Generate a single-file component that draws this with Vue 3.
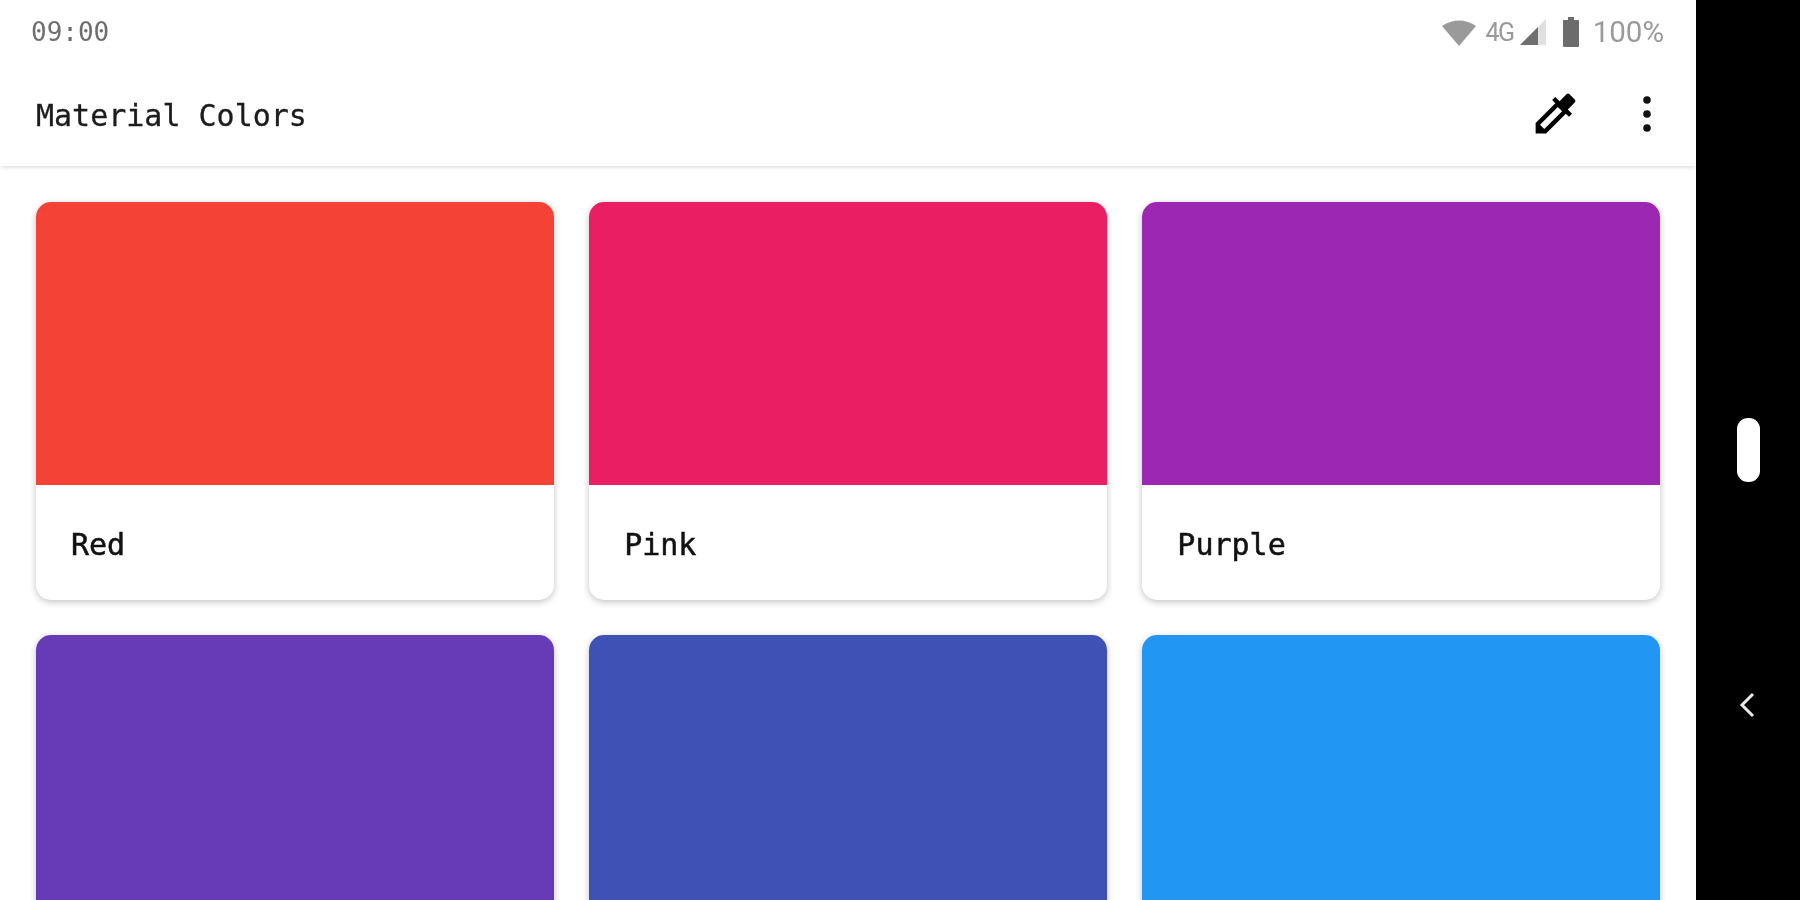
<template>
  <div class="device">
    <div class="screen">
      <div class="status">
        <span class="time">09:00</span>
        <div class="status-right">
          <svg class="wifi" width="36" height="27" viewBox="0 0 36 27">
            <path d="M1 7 Q18 -4 35 7 L18 27 Z" fill="#9a9a9a" />
          </svg>
          <span class="net">4G</span>
          <svg class="signal" width="28" height="28" viewBox="0 0 28 28">
            <path d="M1 27 L27 1 V27 Z" fill="#e0e0e0" />
            <path d="M1 27 L19 9 V27 Z" fill="#6e6e6e" />
          </svg>
          <svg class="battery" width="18" height="30" viewBox="0 0 18 30">
            <path d="M6 0 H12 V3 H16 Q17 3 17 4 V29 Q17 30 16 30 H2 Q1 30 1 29 V4 Q1 3 2 3 H6 Z" fill="#6c6c6c" />
          </svg>
          <span class="pct">100%</span>
        </div>
      </div>

      <header class="appbar">
        <h1>Material Colors</h1>
        <div class="actions">
          <svg class="dropper" width="53" height="53" viewBox="0 0 24 24">
            <path d="M20.710 5.630l-2.340-2.340a1 1 0 0 0-1.410 0l-3.120 3.120-1.930-1.910-1.410 1.410 1.420 1.420L3 16.250V21h4.750l8.920-8.920 1.420 1.420 1.410-1.410-1.920-1.920 3.120-3.120a1 1 0 0 0 .010-1.420zM6.920 19L5 17.080l8.060-8.060 1.920 1.920L6.920 19z" fill="#000" />
          </svg>
          <svg class="more" width="12" height="40" viewBox="0 0 12 40">
            <circle cx="6" cy="6" r="3.800" fill="#111" />
            <circle cx="6" cy="20" r="3.800" fill="#111" />
            <circle cx="6" cy="34" r="3.800" fill="#111" />
          </svg>
        </div>
      </header>

      <main class="grid">
        <div v-for="c in colors" :key="c.hex" class="card">
          <div class="swatch" :style="{ background: c.hex }"></div>
          <div class="label">{{ c.name }}</div>
        </div>
      </main>
    </div>

    <aside class="navbar">
      <div class="pill"></div>
      <svg class="back" width="18" height="28" viewBox="0 0 18 28">
        <path d="M14 3 L3 14 L14 25" fill="none" stroke="#e8e8e8" stroke-width="3" />
      </svg>
    </aside>
  </div>
</template>

<script setup>
// second row labels sit below the fold
const colors = [
  { name: 'Red', hex: '#f44336' },
  { name: 'Pink', hex: '#e91e63' },
  { name: 'Purple', hex: '#9c27b0' },
  { name: '', hex: '#673ab7' },
  { name: '', hex: '#3f51b5' },
  { name: '', hex: '#2196f3' }
]
</script>

<style>
html, body { margin: 0; overflow: hidden; background: #000; }
</style>

<style scoped>
.device { display: flex; width: 1800px; height: 900px; overflow: hidden; background: #000; }
.screen { width: 1696px; background: #fff; display: flex; flex-direction: column; }

.status { height: 64px; display: flex; align-items: center; justify-content: space-between; padding: 0 32px 0 31px; font-family: "Roboto", sans-serif; flex-shrink: 0; }
.time { font-family: "DejaVu Sans Mono", monospace; font-size: 26px; color: #6e6e6e; filter: blur(0.5px); }
.status-right { display: flex; align-items: center; filter: blur(0.5px); }
.net { font-size: 25px; color: #9a9a9a; margin-left: 9px; letter-spacing: -1.5px; }
.signal { margin-left: 5px; }
.battery { margin-left: 15px; }
.pct { font-size: 29.5px; color: #9a9a9a; margin-left: 13px; }

.appbar { height: 102px; flex-shrink: 0; display: flex; align-items: center; justify-content: space-between; padding: 0 43px 0 36px; box-shadow: 0 2px 4px -1px rgba(0, 0, 0, 0.16); }
.appbar h1 { margin: 0; font-family: "DejaVu Sans Mono", monospace; font-size: 30px; font-weight: 400; color: #1c1c1c; -webkit-text-stroke: 0.3px #1c1c1c; filter: blur(0.5px); }
.actions { display: flex; align-items: center; gap: 59px; margin-top: -3px; filter: blur(0.4px); }

.grid { display: grid; grid-template-columns: repeat(3, 1fr); column-gap: 35.5px; row-gap: 35px; padding: 36px; align-content: start; }
.card { height: 398px; background: #fff; border-radius: 15px; overflow: hidden; box-shadow: 0 2px 7px rgba(0, 0, 0, 0.24); }
.swatch { height: 283px; }
.label { padding: 4px 35px 0; height: 111px; display: flex; align-items: center; font-family: "DejaVu Sans Mono", monospace; font-size: 30px; color: #111; -webkit-text-stroke: 0.5px #111; filter: blur(0.5px); }

.navbar { flex: 1; display: flex; flex-direction: column; align-items: center; }
.pill { width: 23px; height: 64px; margin-top: 418px; border-radius: 11px; background: #fff; }
.back { margin-top: 209px; }
</style>
